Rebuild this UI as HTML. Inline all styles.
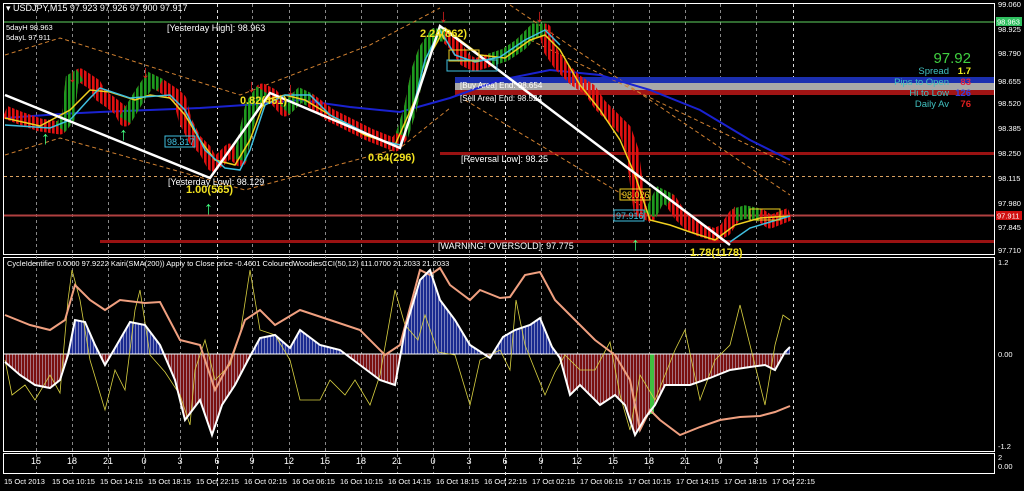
<!DOCTYPE html>
<html><head><meta charset="utf-8"><style>
body{margin:0;background:#000;width:1024px;height:486px;overflow:hidden;font-family:"Liberation Sans",sans-serif}
svg text{font-family:"Liberation Sans",sans-serif}
</style></head><body>
<svg width="1024" height="486" viewBox="0 0 1024 486" xmlns="http://www.w3.org/2000/svg">
<defs>
<clipPath id="up"><rect x="0" y="257" width="1000" height="97"/></clipPath>
<clipPath id="dn"><rect x="0" y="354" width="1000" height="100"/></clipPath>
<pattern id="stp" width="4" height="10" patternUnits="userSpaceOnUse"><rect x="0" y="0" width="2.6" height="10" fill="#fff"/></pattern>
<mask id="bars"><rect x="0" y="0" width="1024" height="260" fill="url(#stp)"/></mask>
<pattern id="hst" width="3" height="10" patternUnits="userSpaceOnUse"><rect x="0" y="0" width="1" height="10" fill="#c8c8e0"/></pattern>
</defs>
<rect width="1024" height="486" fill="#000"/>
<rect x="3.5" y="3.5" width="991" height="251" fill="none" stroke="#fff"/>
<rect x="3.5" y="257.5" width="991" height="194" fill="none" stroke="#fff"/>
<rect x="3.5" y="453.5" width="991" height="20" fill="none" stroke="#fff"/>
<g stroke="#888" stroke-dasharray="3,3" stroke-width="1">
<path d="M36.5 4V473M72.5 4V473M108.5 4V473M144.5 4V473M180.5 4V473M252.5 4V473M289.5 4V473M325.5 4V473M361.5 4V473M397.5 4V473M433.5 4V473M469.5 4V473M541.5 4V473M577.5 4V473M613.5 4V473M649.5 4V473M685.5 4V473M720.5 4V473M756.5 4V473"/>
</g>
<g stroke="#ddd" stroke-dasharray="3,3"><path d="M217.5 4V486M505.5 4V486M793.5 4V486"/></g>
<line x1="4" y1="22" x2="994" y2="22" stroke="#5fd35f"/>
<rect x="455" y="77" width="539" height="6" fill="#1b2fb0"/>
<rect x="455" y="83" width="539" height="7" fill="#a8a8a8"/>
<rect x="455" y="90" width="539" height="5" fill="#a01414"/>
<rect x="440" y="152" width="554" height="3" fill="#9a1212"/>
<line x1="4" y1="176.5" x2="994" y2="176.5" stroke="#d9a060" stroke-dasharray="3,3"/>
<line x1="4" y1="215.5" x2="994" y2="215.5" stroke="#b04040" stroke-width="2"/>
<rect x="100" y="240" width="894" height="3" fill="#9a1212"/>
<g fill="none" stroke="#d08030" stroke-dasharray="4,3" stroke-width="1">
<polyline points="5,55 60,38 240,95 370,45 440,8"/>
<polyline points="5,155 60,138 245,190 400,148 450,108"/>
<polyline points="510,5 790,195"/>
<polyline points="465,100 640,205"/>
<polyline points="530,40 790,165"/>
</g>
<polyline fill="none" stroke="#1a22d0" stroke-width="2" points="5,118 60,114 100,112 150,110 200,108 260,104 300,100 350,107 400,112 450,98 500,80 550,70 600,75 650,90 700,110 750,140 790,160"/>
<g mask="url(#bars)">
<polyline fill="none" stroke="#e01010" stroke-width="13" stroke-linejoin="round" points="5,112 20,118 40,125 60,128 68,118 72,80 80,75 95,85 100,95 110,102 120,110 125,120 140,95 150,80 160,85 175,95 180,100 185,120 195,140 205,150 213,165 220,160 230,150 240,160 245,135 252,105 262,90 272,95 285,110 300,95 310,100 330,115 350,125 370,135 395,145 402,135 410,110 418,70 425,50 435,35 445,35 455,45 465,60 475,65 490,60 505,55 520,45 535,30 545,30 550,50 560,65 575,80 590,90 600,105 615,120 625,130 632,150 640,210 650,215 660,195 670,200 680,215 690,225 700,230 715,235 725,230 735,215 745,212 760,215 770,222 780,218 790,214"/>
<g fill="none" stroke="#1e9a1e" stroke-width="13">
<polyline points="60,128 68,118 72,80 80,75"/>
<polyline points="125,120 140,95 150,80 160,85"/>
<polyline points="240,160 245,135 252,105 262,90"/>
<polyline points="285,110 300,95 310,100"/>
<polyline points="402,135 410,110 418,70 425,50 435,35 445,35"/>
<polyline points="490,60 505,55 520,45 535,30 545,30"/>
<polyline points="650,215 660,195 670,200"/>
<polyline points="735,215 745,212 760,215"/>
</g>
</g>
<polyline fill="none" stroke="#f0d020" stroke-width="1.5" points="5,118 40,126 70,110 90,90 110,92 135,100 150,95 170,98 185,115 200,140 215,160 235,165 250,140 265,100 285,95 305,100 330,115 365,135 395,145 415,100 430,55 445,28 460,40 480,55 505,58 530,40 545,35 560,50 580,85 600,110 620,140 635,175 650,220 670,225 690,232 715,240 735,225 760,218 790,216"/>
<polyline fill="none" stroke="#40c0e0" stroke-width="1.5" points="5,125 50,128 70,120 90,98 100,88 130,98 170,95 185,110 205,150 225,168 240,170 250,150 265,105 285,95 310,95 330,115 380,140 400,145 410,120 425,60 440,30 455,55 475,62 500,57 525,40 545,30 560,45"/>
<polyline fill="none" stroke="#40c0e0" stroke-width="1.5" points="730,242 750,228 770,222 790,216"/>
<polyline fill="none" stroke="#fff" stroke-width="2.5" points="5,95 210,178 270,93 400,148 440,26 730,245"/>
<g font-size="18" font-weight="bold">
<text x="68" y="82" fill="#e02020">↓</text><text x="141" y="78" fill="#e02020">↓</text>
<text x="247" y="92" fill="#e02020">↓</text><text x="286" y="95" fill="#e02020">↓</text>
<text x="439" y="22" fill="#e02020">↓</text><text x="535" y="22" fill="#e02020">↓</text>
<text x="730" y="217" fill="#e02020">↓</text>
<text x="41" y="144" fill="#40ff80">↑</text><text x="119" y="140" fill="#40ff80">↑</text>
<text x="204" y="214" fill="#40ff80">↑</text><text x="631" y="250" fill="#40ff80">↑</text>
</g>
<g font-size="9" fill="#fff">
<text x="6" y="11">▾ USDJPY,M15  97.923 97.926 97.900 97.917</text>
<text x="6" y="30" font-size="7.5">5dayH 98.963</text>
<text x="6" y="40" font-size="7.5">5dayL 97.911</text>
<text x="167" y="31">[Yesterday High]: 98.963</text>
<text x="168" y="185">[Yesterday Low]: 98.129</text>
<text x="461" y="162">[Reversal Low]: 98.25</text>
<text x="438" y="249">[WARNING! OVERSOLD]: 97.775</text>
<text x="460" y="88" font-size="8">[Buy Area] End: 98.654</text>
<text x="460" y="101" font-size="8">[Sell Area] End: 98.524</text>
</g>
<g font-size="11" font-weight="bold" fill="#f0e020" font-family="Liberation Mono">
<text x="420" y="37">2.24(862)</text>
<text x="240" y="104">0.82(461)</text>
<text x="368" y="161">0.64(296)</text>
<text x="186" y="193">1.00(565)</text>
<text x="690" y="256">1.78(1178)</text>
</g>
<g font-size="9">
<rect x="165" y="136" width="30" height="11" fill="none" stroke="#40c0e0"/><text x="167" y="145" fill="#40c0e0">98.317</text>
<rect x="620" y="189" width="30" height="11" fill="none" stroke="#f0d020"/><text x="622" y="198" fill="#f0d020">98.026</text>
<rect x="614" y="210" width="30" height="11" fill="none" stroke="#40c0e0"/><text x="616" y="219" fill="#40c0e0">97.916</text>
<rect x="449" y="50" width="30" height="11" fill="none" stroke="#f0d020"/>
<rect x="447" y="60" width="50" height="11" fill="none" stroke="#40c0e0"/>
<rect x="750" y="209" width="30" height="11" fill="none" stroke="#f0d020"/>
</g>
<text x="971" y="63" font-size="15" fill="#40d040" text-anchor="end">97.92</text>
<g font-size="9.5" text-anchor="end">
<text x="949" y="74" fill="#40c0c0">Spread</text><text x="971" y="74" fill="#f0f020" font-weight="bold">1.7</text>
<text x="949" y="85" fill="#40c0c0">Pips to Open</text><text x="971" y="85" fill="#e02040" font-weight="bold">83</text>
<text x="949" y="96" fill="#40c0c0">Hi to Low</text><text x="971" y="96" fill="#3040e0" font-weight="bold">126</text>
<text x="949" y="107" fill="#40c0c0">Daily Av</text><text x="971" y="107" fill="#e02020" font-weight="bold">76</text>
</g>
<g font-size="7.5" fill="#fff">
<text x="998" y="7">99.060</text><text x="998" y="32">98.925</text><text x="998" y="56">98.790</text>
<text x="998" y="84">98.655</text><text x="998" y="106">98.520</text><text x="998" y="131">98.385</text>
<text x="998" y="156">98.250</text><text x="998" y="181">98.115</text><text x="998" y="206">97.980</text>
<text x="998" y="230">97.845</text><text x="998" y="253">97.710</text>
<text x="998" y="265">1.2</text><text x="998" y="357">0.00</text><text x="998" y="449">-1.2</text>
<text x="998" y="460">2</text><text x="998" y="469">0.00</text>
</g>
<rect x="996" y="17" width="26" height="9" fill="#30c060"/><text x="997" y="24.5" font-size="7.5" fill="#fff">98.963</text>
<rect x="996" y="211" width="26" height="9" fill="#d01010"/><text x="997" y="218.5" font-size="7.5" fill="#fff">97.911</text>
<text x="7" y="266" font-size="7.5" fill="#fff">CycleIdentifier 0.0000 97.9222  Kairi(SMA(200)) Apply to Close price -0.4601  ColouredWoodiesCCI(50,12) 111.0700 21.2033 21.2033</text>
<g>
<path id="area" clip-path="url(#up)" fill="#1a2a90" d="M5,354 L5,362 20,375 35,385 50,388 60,380 68,355 75,320 85,322 95,345 105,365 115,348 130,322 145,325 160,345 175,380 185,420 200,400 212,435 222,405 235,385 248,360 260,338 275,335 290,348 300,330 320,345 340,350 360,365 380,380 395,385 405,330 420,280 430,270 440,300 455,320 470,345 490,358 503,337 515,330 530,325 540,318 552,347 560,358 570,395 580,385 600,405 615,395 625,405 635,435 645,418 655,405 665,385 690,385 710,378 730,370 750,367 765,365 775,370 785,352 790,347 790,354Z"/>
<path clip-path="url(#dn)" fill="#7a1010" d="M5,354 L5,362 20,375 35,385 50,388 60,380 68,355 75,320 85,322 95,345 105,365 115,348 130,322 145,325 160,345 175,380 185,420 200,400 212,435 222,405 235,385 248,360 260,338 275,335 290,348 300,330 320,345 340,350 360,365 380,380 395,385 405,330 420,280 430,270 440,300 455,320 470,345 490,358 503,337 515,330 530,325 540,318 552,347 560,358 570,395 580,385 600,405 615,395 625,405 635,435 645,418 655,405 665,385 690,385 710,378 730,370 750,367 765,365 775,370 785,352 790,347 790,354Z"/>
<path opacity="0.55" fill="url(#hst)" d="M5,354 L5,362 20,375 35,385 50,388 60,380 68,355 75,320 85,322 95,345 105,365 115,348 130,322 145,325 160,345 175,380 185,420 200,400 212,435 222,405 235,385 248,360 260,338 275,335 290,348 300,330 320,345 340,350 360,365 380,380 395,385 405,330 420,280 430,270 440,300 455,320 470,345 490,358 503,337 515,330 530,325 540,318 552,347 560,358 570,395 580,385 600,405 615,395 625,405 635,435 645,418 655,405 665,385 690,385 710,378 730,370 750,367 765,365 775,370 785,352 790,347 790,354Z"/>
<rect x="650" y="354" width="4" height="60" fill="#40c040"/>
<line x1="4" y1="354" x2="790" y2="354" stroke="#fff" stroke-width="1"/>
<polyline fill="none" stroke="#d8d040" stroke-width="0.8" points="5,360 12,395 25,385 35,400 50,375 60,393 68,300 72,270 80,300 90,360 105,410 115,370 125,390 135,310 140,290 150,355 165,372 180,395 190,425 195,370 205,340 215,380 230,365 240,335 250,270 260,330 275,335 290,360 300,400 320,400 330,380 345,395 355,380 370,405 380,375 395,290 405,325 418,340 425,315 438,352 455,355 470,405 480,360 500,350 510,370 516,300 525,345 545,395 555,372 565,355 580,370 595,370 610,342 620,395 630,430 640,375 655,400 665,375 675,350 685,330 700,400 715,360 730,345 740,305 755,365 765,405 775,345 783,315 790,320"/>
<polyline fill="none" stroke="#f0a080" stroke-width="2" points="5,315 30,325 50,330 65,320 75,285 90,300 105,310 120,300 145,303 160,302 180,340 200,345 215,390 230,362 245,320 260,310 275,325 300,310 330,320 360,330 385,355 400,345 420,270 430,275 440,268 450,285 470,300 480,290 500,298 510,297 525,275 540,272 555,300 575,320 595,340 615,355 630,380 640,430 650,410 660,420 680,435 700,427 720,420 740,417 760,416 775,412 790,406"/>
<polyline fill="none" stroke="#fff" stroke-width="2" points="5,362 20,375 35,385 50,388 60,380 68,355 75,320 85,322 95,345 105,365 115,348 130,322 145,325 160,345 175,380 185,420 200,400 212,435 222,405 235,385 248,360 260,338 275,335 290,348 300,330 320,345 340,350 360,365 380,380 395,385 405,330 420,280 430,270 440,300 455,320 470,345 490,358 503,337 515,330 530,325 540,318 552,347 560,358 570,395 580,385 600,405 615,395 625,405 635,435 645,418 655,405 665,385 690,385 710,378 730,370 750,367 765,365 775,370 785,352 790,347"/>
</g>
<g font-size="9" fill="#fff" text-anchor="middle">
<text x="36" y="464">15</text><text x="72" y="464">18</text><text x="108" y="464">21</text><text x="144" y="464">0</text><text x="180" y="464">3</text><text x="217" y="464">6</text><text x="252" y="464">9</text><text x="289" y="464">12</text><text x="325" y="464">15</text><text x="361" y="464">18</text><text x="397" y="464">21</text><text x="433" y="464">0</text><text x="469" y="464">3</text><text x="505" y="464">6</text><text x="541" y="464">9</text><text x="577" y="464">12</text><text x="613" y="464">15</text><text x="649" y="464">18</text><text x="685" y="464">21</text><text x="720" y="464">0</text><text x="756" y="464">3</text>
</g>
<g font-size="7.5" fill="#fff">
<text x="4" y="484">15 Oct 2013</text><text x="52" y="484">15 Oct 10:15</text><text x="100" y="484">15 Oct 14:15</text><text x="148" y="484">15 Oct 18:15</text><text x="196" y="484">15 Oct 22:15</text><text x="244" y="484">16 Oct 02:15</text><text x="292" y="484">16 Oct 06:15</text><text x="340" y="484">16 Oct 10:15</text><text x="388" y="484">16 Oct 14:15</text><text x="436" y="484">16 Oct 18:15</text><text x="484" y="484">16 Oct 22:15</text><text x="532" y="484">17 Oct 02:15</text><text x="580" y="484">17 Oct 06:15</text><text x="628" y="484">17 Oct 10:15</text><text x="676" y="484">17 Oct 14:15</text><text x="724" y="484">17 Oct 18:15</text><text x="772" y="484">17 Oct 22:15</text>
</g>
</svg>
</body></html>
